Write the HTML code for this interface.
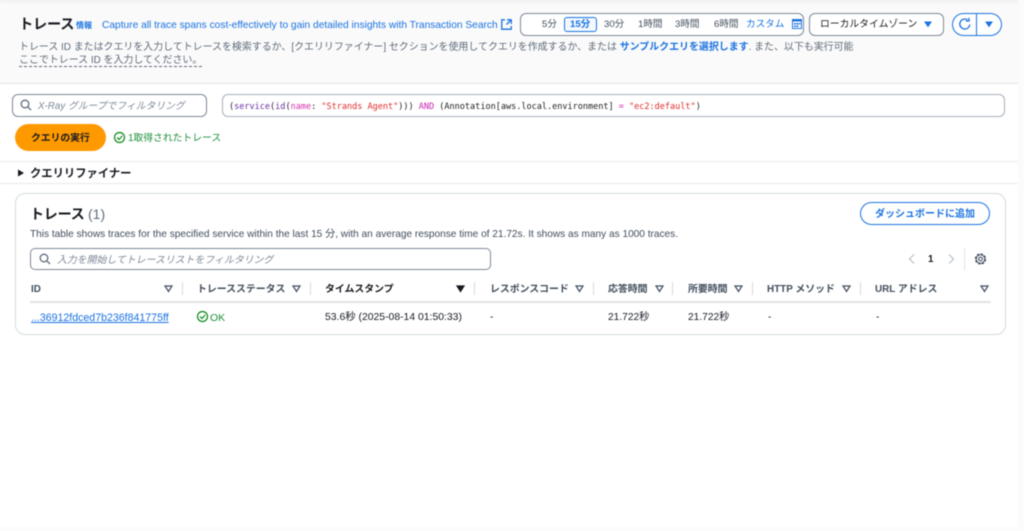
<!DOCTYPE html>
<html lang="ja"><head><meta charset="utf-8"><style>
html,body{margin:0;padding:0;background:#fff}
#p{position:relative;width:1024px;height:531px;overflow:hidden;background:#fff;font-family:"Liberation Sans","Noto Sans CJK JP",sans-serif;color:#16191f;filter:blur(.45px)}
.a{position:absolute;white-space:nowrap;line-height:14px}
.b{position:absolute;box-sizing:border-box}
.g{color:#5f6b7a}.l{color:#1a73e0}
.m{font-family:"DejaVu Sans Mono","Noto Sans CJK JP",monospace}
.th{font-size:9.9px;font-weight:700;color:#414d5c;top:283px}
.td{font-size:10.2px;color:#16191f;top:311px}
.sep{position:absolute;top:282px;width:1px;height:13px;background:#d5dbdb}
svg{position:absolute;overflow:visible}
</style></head><body><div id="p">
<div class="b" style="left:0;top:0;width:1024px;height:4px;background:linear-gradient(#eee,#fafafa)"></div>
<div class="b" style="left:0;top:4px;width:1018px;height:80px;background:#fafafa;border-bottom:1px solid #e3e3e3"></div>
<div class="b" style="left:1018px;top:0;width:6px;height:531px;background:#fbfbfb"></div>
<div class="b" style="left:0;top:527px;width:1024px;height:4px;background:#fbfbfb"></div>

<div class="a" style="left:19px;top:18px;font-size:14.2px;font-weight:700;letter-spacing:-.2px">トレース</div>
<div class="a l" style="left:76px;top:19px;font-size:8px;font-weight:700">情報</div>
<div class="a l" style="left:102px;top:19px;font-size:10.2px">Capture all trace spans cost-effectively to gain detailed insights with Transaction Search</div>
<svg style="left:501px;top:19px" width="11" height="11" viewBox="0 0 11 11" fill="none" stroke="#1a73e0" stroke-width="1.300"><path d="M4 .8H.8v9.400h9.400V7M6 .8h4.200V5M10 1L5.500 5.500"/></svg>

<div class="a g" style="left:19px;top:41px;font-size:9.95px">トレース ID またはクエリを入力してトレースを検索するか、[クエリリファイナー] セクションを使用してクエリを作成するか、または <b class="l">サンプルクエリを選択します</b>. また、以下も実行可能</div>
<div class="a g" style="left:19px;top:53px;font-size:9.95px;border-bottom:1px dashed #5f6b7a;line-height:12px;height:11px;padding-top:2px">ここでトレース ID を入力してください。</div>

<div class="b" style="left:520px;top:13px;width:284px;height:23px;border:1px solid #7d8998;border-radius:6px;background:#fff"></div>
<div class="a" style="left:542px;top:18px;font-size:9.6px;color:#414d5c">5分</div>
<div class="b" style="left:564px;top:17px;width:33px;height:15px;border:1px solid #1a73e0;border-radius:3px;background:#f2f8fd"></div>
<div class="a l" style="left:570px;top:18px;font-size:9.6px;font-weight:700">15分</div>
<div class="a" style="left:604px;top:18px;font-size:9.6px;color:#414d5c">30分</div>
<div class="a" style="left:638px;top:18px;font-size:9.6px;color:#414d5c">1時間</div>
<div class="a" style="left:675px;top:18px;font-size:9.6px;color:#414d5c">3時間</div>
<div class="a" style="left:714px;top:18px;font-size:9.6px;color:#414d5c">6時間</div>
<div class="a l" style="left:746px;top:18px;font-size:9.6px">カスタム</div>
<svg style="left:792px;top:19px" width="11" height="10" viewBox="0 0 11 10"><rect x=".5" y=".5" width="9" height="9" fill="#fff" stroke="#1a73e0"/><path d="M.5 .5h9v2h-9zM2 4h2v1.500H2zM4.500 4h2v1.500h-2zM7 4h1.500v1.500H7zM2 6.500h2V8H2zM4.500 6.500h2V8h-2z" fill="#1a73e0"/></svg>

<div class="b" style="left:809px;top:13px;width:135px;height:23px;border:1px solid #7d8998;border-radius:6px;background:#fff"></div>
<div class="a" style="left:820px;top:18px;font-size:9.8px;color:#16191f">ローカルタイムゾーン</div>
<svg style="left:924px;top:21px" width="8" height="7" viewBox="0 0 8 7"><path d="M1 1h6L4 5.500z" fill="#1a73e0" stroke="#1a73e0"/></svg>

<div class="b" style="left:952px;top:13px;width:50px;height:23px;border:1.500px solid #1a73e0;border-radius:12px;background:#fff"></div>
<div class="b" style="left:976px;top:13px;width:1.300px;height:23px;background:#1a73e0"></div>
<svg style="left:958px;top:17px" width="14" height="14" viewBox="0 0 14 14" fill="none" stroke="#1a73e0" stroke-width="1.300"><path d="M11.800 7.500A5 5 0 1 1 9.500 2.800"/><path d="M11 .8v3.200H7.800"/></svg>
<svg style="left:985px;top:21px" width="8" height="7" viewBox="0 0 8 7"><path d="M1 1h6L4 5.500z" fill="#1a73e0" stroke="#1a73e0"/></svg>

<div class="b" style="left:12px;top:94px;width:195px;height:23px;border:1px solid #7d8998;border-radius:6px;background:#fff"></div>
<svg style="left:20px;top:99px" width="12" height="12" viewBox="0 0 12 12" fill="none" stroke="#5f6b7a" stroke-width="1.300"><circle cx="5" cy="5" r="3.800"/><path d="M7.800 7.800L11 11"/></svg>
<div class="a" style="left:38px;top:100px;font-size:9.800px;font-style:italic;color:#7d8998">X-Ray グループでフィルタリング</div>

<div class="b" style="left:222px;top:94px;width:783px;height:23px;border:1px solid #a8b0ba;border-radius:6px;background:#fff"></div>
<div class="a m" style="left:229px;top:100px;font-size:8.53px;color:#222">(<span style="color:#6b2fa0">service</span>(<span style="color:#6b2fa0">id</span>(<span style="color:#d62fb0">name</span>: <span style="color:#e02b2b">"Strands Agent"</span>))) <span style="color:#c724b1">AND</span> (Annotation[aws.local.environment] <span style="color:#d62fb0">=</span> <span style="color:#e02b2b">"ec2:default"</span>)</div>

<div class="b" style="left:15px;top:124px;width:91px;height:27px;background:#ff9900;border-radius:14px"></div>
<div class="a" style="left:31px;top:132px;font-size:9.800px;font-weight:700">クエリの実行</div>
<svg style="left:113px;top:131px" width="13" height="13" viewBox="0 0 13 13" fill="none" stroke="#0b8a1a" stroke-width="1.200"><circle cx="6.500" cy="6.500" r="5"/><path d="M4 6.500l2 2 3.200-3.600"/></svg>
<div class="a" style="left:128px;top:132px;font-size:9.800px;color:#1d8f3a">1取得されたトレース</div>

<div class="b" style="left:0;top:161px;width:1018px;height:1px;background:#e9ebed"></div>
<svg style="left:17px;top:169px" width="8" height="9" viewBox="0 0 8 9"><path d="M1 .5l6 3.500-6 3.500z" fill="#16191f"/></svg>
<div class="a" style="left:30px;top:167px;font-size:11.300px;font-weight:700">クエリリファイナー</div>
<div class="b" style="left:0;top:183px;width:1018px;height:1px;background:#e9ebed"></div>

<div class="b" style="left:15px;top:193px;width:991px;height:142px;border:1px solid #d5dbdb;border-radius:10px;background:#fff"></div>
<div class="a" style="left:30px;top:207px;font-size:14px;font-weight:700;letter-spacing:-.2px">トレース</div>
<div class="a" style="left:88px;top:207px;font-size:14px;color:#5f6b7a">(1)</div>
<div class="a" style="left:30px;top:228px;font-size:10.100px;color:#414d5c">This table shows traces for the specified service within the last 15 分, with an average response time of 21.72s. It shows as many as 1000 traces.</div>

<div class="b" style="left:860px;top:202px;width:130px;height:23px;border:1.200px solid #1a73e0;border-radius:12px;background:#fff"></div>
<div class="a l" style="left:875px;top:208px;font-size:10px;font-weight:700">ダッシュボードに追加</div>

<div class="b" style="left:30px;top:248px;width:461px;height:22px;border:1px solid #7d8998;border-radius:5px;background:#fff"></div>
<svg style="left:39px;top:253px" width="12" height="12" viewBox="0 0 12 12" fill="none" stroke="#5f6b7a" stroke-width="1.300"><circle cx="5" cy="5" r="3.800"/><path d="M7.800 7.800L11 11"/></svg>
<div class="a" style="left:57px;top:254px;font-size:9.900px;font-style:italic;color:#7d8998">入力を開始してトレースリストをフィルタリング</div>

<svg style="left:907px;top:253px" width="10" height="12" viewBox="0 0 10 12" fill="none" stroke="#b6bec9" stroke-width="1.200"><path d="M7 1.500L2.500 6 7 10.500"/></svg>
<div class="a" style="left:928px;top:253px;font-size:9.800px;font-weight:700;color:#16191f">1</div>
<svg style="left:946px;top:253px" width="10" height="12" viewBox="0 0 10 12" fill="none" stroke="#b6bec9" stroke-width="1.200"><path d="M3 1.500L7.500 6 3 10.500"/></svg>
<div class="b" style="left:964px;top:248px;width:1px;height:22px;background:#e0e3e6"></div>
<svg style="left:974px;top:252px" width="13" height="14" viewBox="0 0 13 14" fill="none" stroke="#414d5c"><circle cx="6.500" cy="7" r="4.800" stroke-width="1.700" stroke-dasharray="2.400 1.370"/><circle cx="6.500" cy="7" r="4.200" stroke-width=".9"/><circle cx="6.500" cy="7" r="1.800" stroke-width="1.100"/></svg>

<div class="a th" style="left:31px">ID</div>
<div class="a th" style="left:197px">トレースステータス</div>
<div class="a th" style="left:325px;color:#16191f">タイムスタンプ</div>
<div class="a th" style="left:490px">レスポンスコード</div>
<div class="a th" style="left:608px">応答時間</div>
<div class="a th" style="left:688px">所要時間</div>
<div class="a th" style="left:767px">HTTP メソッド</div>
<div class="a th" style="left:875px">URL アドレス</div>

<svg style="left:164px;top:285px" width="9" height="8" viewBox="0 0 9 8"><path d="M1 1h7L4.500 6.500z" fill="#fff" stroke="#414d5c" stroke-width="1.200"/></svg>
<svg style="left:292px;top:285px" width="9" height="8" viewBox="0 0 9 8"><path d="M1 1h7L4.500 6.500z" fill="#fff" stroke="#414d5c" stroke-width="1.200"/></svg>
<svg style="left:456px;top:285px" width="9" height="8" viewBox="0 0 9 8"><path d="M1 1h7L4.500 6.500z" fill="#16191f" stroke="#16191f" stroke-width="1.200"/></svg>
<svg style="left:575px;top:285px" width="9" height="8" viewBox="0 0 9 8"><path d="M1 1h7L4.500 6.500z" fill="#fff" stroke="#414d5c" stroke-width="1.200"/></svg>
<svg style="left:655px;top:285px" width="9" height="8" viewBox="0 0 9 8"><path d="M1 1h7L4.500 6.500z" fill="#fff" stroke="#414d5c" stroke-width="1.200"/></svg>
<svg style="left:734px;top:285px" width="9" height="8" viewBox="0 0 9 8"><path d="M1 1h7L4.500 6.500z" fill="#fff" stroke="#414d5c" stroke-width="1.200"/></svg>
<svg style="left:842px;top:285px" width="9" height="8" viewBox="0 0 9 8"><path d="M1 1h7L4.500 6.500z" fill="#fff" stroke="#414d5c" stroke-width="1.200"/></svg>
<svg style="left:980px;top:285px" width="9" height="8" viewBox="0 0 9 8"><path d="M1 1h7L4.500 6.500z" fill="#fff" stroke="#414d5c" stroke-width="1.200"/></svg>

<div class="sep" style="left:182px"></div>
<div class="sep" style="left:310px"></div>
<div class="sep" style="left:474px"></div>
<div class="sep" style="left:593px"></div>
<div class="sep" style="left:672px"></div>
<div class="sep" style="left:752px"></div>
<div class="sep" style="left:860px"></div>

<div class="b" style="left:30px;top:301px;width:961px;height:1.500px;background:#e0e3e6"></div>

<div class="a td" style="left:31px;text-decoration:underline;font-size:10.600px;color:#1a73e0">...36912fdced7b236f841775ff</div>
<svg style="left:196px;top:310px" width="13" height="13" viewBox="0 0 13 13" fill="none" stroke="#0b8a1a" stroke-width="1.200"><circle cx="6.500" cy="6.500" r="5"/><path d="M4 6.500l2 2 3.200-3.600"/></svg>
<div class="a td" style="left:210px;color:#1d8f3a;font-size:10.500px">OK</div>
<div class="a td" style="left:325px;font-size:10.400px">53.6秒 (2025-08-14 01:50:33)</div>
<div class="a td" style="left:490px">-</div>
<div class="a td" style="left:608px">21.722秒</div>
<div class="a td" style="left:688px">21.722秒</div>
<div class="a td" style="left:768px">-</div>
<div class="a td" style="left:876px">-</div>
</div></body></html>
